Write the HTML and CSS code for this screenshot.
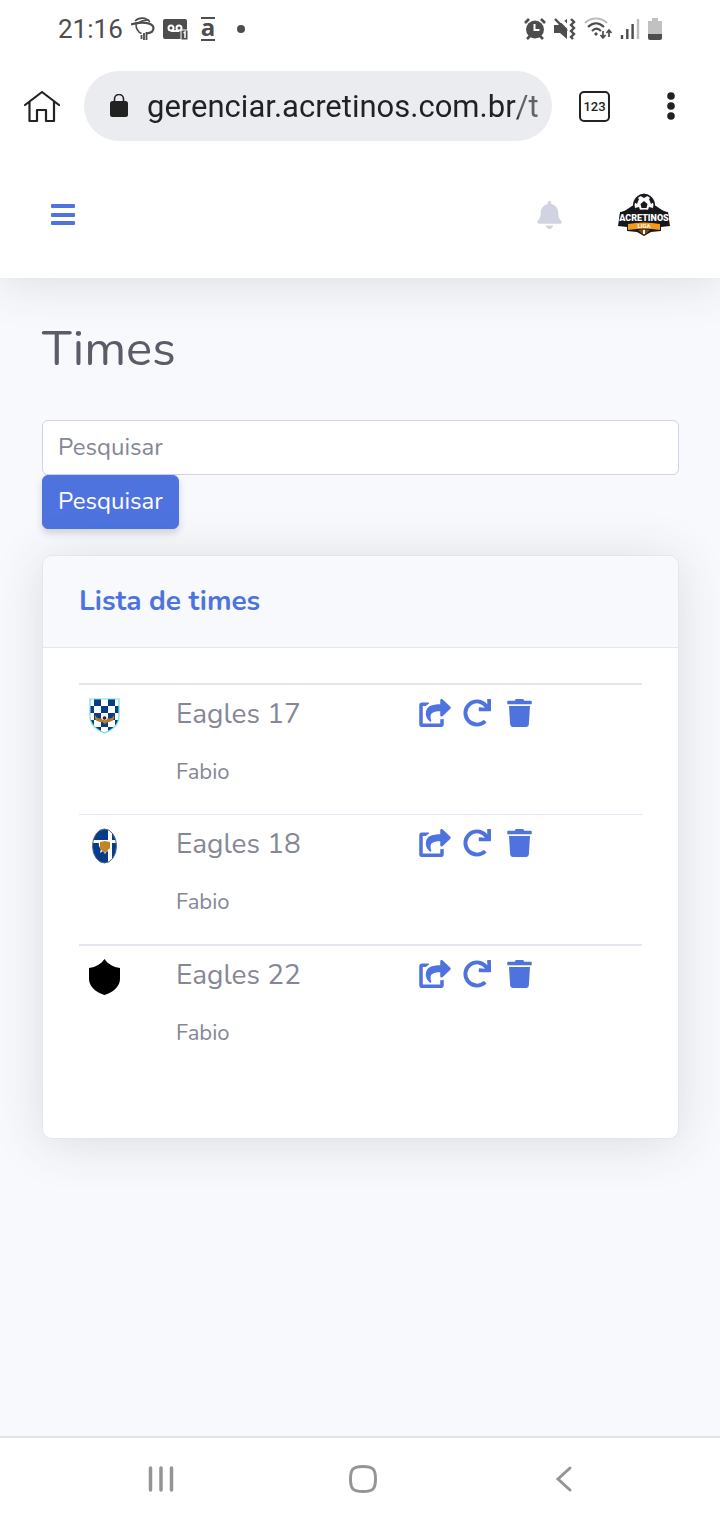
FILE: index.html
```html
<!DOCTYPE html>
<html lang="pt-BR">
<head>
<meta charset="utf-8">
<meta name="viewport" content="width=device-width, initial-scale=1">
<title>Times</title>
<link rel="stylesheet" href="styles.css">
</head>
<body>
<svg class="defs" aria-hidden="true">
  <symbol id="share" viewBox="0 0 576 512">
    <path fill="currentColor" d="M568.482 177.448L424.479 313.433C409.3 327.768 384 317.14 384 295.985v-71.963c-144.575.97-205.566 35.113-164.775 171.353 4.483 14.973-12.846 26.567-25.006 17.33C155.252 383.105 120 326.488 120 269.339c0-143.937 117.599-172.5 264-173.312V24.012c0-21.174 25.317-31.768 40.479-17.448l144.003 135.988c10.02 9.463 10.028 25.425 0 34.896zM384 379.128V448H64V128h50.916a11.99 11.99 0 0 0 8.648-3.693c14.953-15.568 32.237-27.89 51.014-37.676C185.708 80.83 181.584 64 169.033 64H48C21.49 64 0 85.49 0 112v352c0 26.51 21.49 48 48 48h352c26.51 0 48-21.49 48-48v-88.806c0-8.288-8.197-14.066-16.011-11.302a71.83 71.83 0 0 1-34.189 3.377c-7.27-1.046-13.8 4.514-13.8 11.859z"/>
  </symbol>
  <symbol id="redo" viewBox="0 0 512 512">
    <path fill="currentColor" d="M500.33 0h-47.41a12 12 0 0 0-12 12.57l4 82.76A247.42 247.42 0 0 0 256 8C119.34 8 7.9 119.53 8 256.19 8.1 393.07 119.1 504 256 504a247.1 247.1 0 0 0 166.18-63.91 12 12 0 0 0 .48-17.43l-34-34a12 12 0 0 0-16.38-.55A176 176 0 1 1 402.1 157.8l-101.53-4.87a12 12 0 0 0-12.57 12v47.41a12 12 0 0 0 12 12h200.33a12 12 0 0 0 12-12V12a12 12 0 0 0-12-12z"/>
  </symbol>
  <symbol id="trash" viewBox="0 0 448 512">
    <path fill="currentColor" d="M432 32H312l-9.400-18.700A24 24 0 0 0 281.100 0H166.800a23.700 23.700 0 0 0-21.400 13.300L136 32H16A16 16 0 0 0 0 48v32a16 16 0 0 0 16 16h416a16 16 0 0 0 16-16V48a16 16 0 0 0-16-16zM53.200 467a48 48 0 0 0 47.900 45h245.800a48 48 0 0 0 47.900-45L416 128H32z"/>
  </symbol>
</svg>

<header class="status">
  <div class="status-group status-left">
    <span class="clock">21:16</span>
    <svg width="24" height="24" viewBox="0 0 24 24" fill="none" stroke="#4d4d4d">
      <path d="M4 4C8 0 15 0 19 5" stroke-width="1.600"/>
      <path d="M0 7.500C9 4.500 22 5 22.500 11c0 3-3 5-6.500 5.500" stroke-width="2.200"/>
      <path d="M5 7c0 5 2 8 5.500 9.500M18 3c-5 0-9 1-12 4" stroke-width="1.600"/>
      <path d="M10.500 18v4M13 16v7M15.500 15v8" stroke-width="1.800"/>
    </svg>
    <svg width="26" height="24" viewBox="0 0 26 24">
      <rect y="2" width="24" height="20" rx="2" fill="#4d4d4d"/>
      <g fill="none" stroke="#fff" stroke-width="2"><circle cx="8" cy="11" r="2.500"/><circle cx="16" cy="11" r="2.500"/><path d="M8 14h8"/></g>
      <path d="M18 13h7v10h-7z" fill="#4d4d4d" stroke="#fff"/>
      <path d="M20.500 16l1.500-1v6" fill="none" stroke="#fff" stroke-width="1.500"/>
    </svg>
    <span class="app-letter">a</span>
    <span class="dot"></span>
  </div>
  <div class="status-group status-right">
    <svg width="22" height="24" viewBox="0 0 22 24">
      <circle cx="11" cy="12.500" r="9" fill="#4d4d4d"/>
      <path d="M1 6l4-4M21 6l-4-4M3 22l4-4M19 22l-4-4" stroke="#4d4d4d" stroke-width="2.600"/>
      <path d="M10.500 7v6h5" fill="none" stroke="#fff" stroke-width="2"/>
    </svg>
    <svg width="22" height="24" viewBox="0 0 22 24">
      <path d="M0 8h4l9-6v20l-7-6H0z" fill="#4d4d4d"/>
      <path d="M4 0l12 12" stroke="#fff" stroke-width="3.500"/>
      <path d="M1 2l12 12" stroke="#4d4d4d" stroke-width="2.400"/>
      <path d="M17 2l3 3-3 3 3 3-3 3 3 3-3 3 2 2" fill="none" stroke="#4d4d4d" stroke-width="2.400"/>
    </svg>
    <svg width="28" height="24" viewBox="0 0 28 24" fill="none" stroke="#4d4d4d" stroke-width="2.200">
      <path d="M1 6c6-6 16-6 22 0" stroke="#bdbdbd"/>
      <path d="M4 10c5-5 11-5 16 0M8 14c3-3 6-3 9 0"/>
      <circle cx="12" cy="17" r="1.200" fill="#4d4d4d" stroke-width="1"/>
      <path d="M19 14v7M16.500 18l2.500 3 2.500-3M25 20v-7M22.500 16l2.500-3 2.500 3" stroke-width="1.700"/>
    </svg>
    <svg width="20" height="24" viewBox="0 0 20 24">
      <path d="M2 18v4M7.300 12v10M12.600 7v15" stroke="#4d4d4d" stroke-width="2.400"/>
      <path d="M18 2v20" stroke="#bdbdbd" stroke-width="2.400"/>
    </svg>
    <svg width="14" height="24" viewBox="0 0 14 24">
      <path d="M0 4h4V1h6v3h4v13H0z" fill="#c1c1c1"/>
      <path d="M0 17h14v4a2 2 0 0 1-2 2H2a2 2 0 0 1-2-2z" fill="#4d4d4d"/>
    </svg>
  </div>
</header>

<div class="toolbar">
  <button class="icon-btn" aria-label="Página inicial">
    <svg width="36" height="34" viewBox="0 0 36 34" fill="none" stroke="#222" stroke-width="2.200" stroke-linecap="round" stroke-linejoin="round">
      <path d="M1 16L18 3l17 13M5.500 13v19H13V21h9v11h8V13"/>
    </svg>
  </button>
  <div class="omnibox">
    <svg width="18" height="24" viewBox="0 0 18 24">
      <rect y="7" width="18" height="16" rx="2.500" fill="#222"/>
      <path d="M4.500 8V5a4.500 4.500 0 0 1 9 0v3" fill="none" stroke="#222" stroke-width="1.600"/>
    </svg>
    <input class="url" type="text" aria-label="Endereço" value="gerenciar.acretinos.com.br/t">
  </div>
  <button class="tabs" aria-label="Guias abertas">123</button>
  <button class="icon-btn" aria-label="Mais opções">
    <svg width="10" height="30" viewBox="0 0 10 30" fill="#222"><circle cx="5" cy="5" r="3.800"/><circle cx="5" cy="15" r="3.800"/><circle cx="5" cy="25" r="3.800"/></svg>
  </button>
</div>

<nav class="topbar">
  <button class="icon-btn menu" aria-label="Menu">
    <svg width="26" height="22" viewBox="0 0 26 22" fill="#4e73df"><rect width="24" height="4" rx="1" x="1" y="0"/><rect width="24" height="4" rx="1" x="1" y="9"/><rect width="24" height="4" rx="1" x="1" y="17"/></svg>
  </button>
  <button class="icon-btn bell" aria-label="Alertas">
    <svg width="25" height="28" viewBox="0 0 448 512" fill="#d1d3e2"><path d="M224 512c35.300 0 64-28.700 64-64H160c0 35.300 28.700 64 64 64zm215.400-149.700c-19.300-20.800-55.500-52-55.500-154.300 0-77.700-54.500-139.900-127.900-155.200V32c0-17.700-14.300-32-32-32s-32 14.300-32 32v20.800C118.600 68.100 64.100 130.300 64.100 208c0 102.300-36.200 133.500-55.500 154.300-6 6.400-8.700 14.200-8.600 21.700.1 16.400 13 32 32.100 32h383.800c19.100 0 32-15.600 32.100-32 0-7.600-2.600-15.300-8.500-21.700z"/></svg>
  </button>
  <button class="icon-btn" aria-label="Acretinos Liga">
    <svg width="54" height="44" viewBox="0 0 54 44">
      <path d="M9 17l9-6h18l9 6 6 3 2 13-9 1v4l-10 1-7 4-7-4-10-1v-4l-9-1 2-13z" fill="#18171c"/>
      <circle cx="27" cy="12" r="11" fill="#17191e"/>
      <circle cx="27" cy="12" r="9.500" fill="#fafafa"/>
      <path d="M23.500 11l3.500-3 3.500 3-1 4h-5zM22 2l5 3 5-3-5-1.500zM17 9l3 2 2-5-2-2zM37 9l-3 2-2-5 2-2zM18 15l4-1 2 6h-5zM36 15l-4-1-2 6h5z" fill="#17191e"/>
      <path d="M3 19q24-5 48 0l1 12q-25-4-50 0z" fill="#18171c"/>
      <text x="27" y="28" text-anchor="middle" class="logo-name">ACRETINOS</text>
      <path d="M11 31q16-3 32 0v6q-16-3-32 0z" fill="#f39a17"/>
      <text x="27" y="35" text-anchor="middle" class="logo-sub">LIGA</text>
      <path d="M21 37l6-1 6 1-3 3-3 2-3-2z" fill="#7b4a25"/>
      <path d="M26 37h2v4h-2z" fill="#fff"/>
    </svg>
  </button>
</nav>

<main class="page">
  <h1>Times</h1>
  <form class="search">
    <input class="field" type="text" placeholder="Pesquisar" aria-label="Pesquisar">
    <button class="submit" type="button">Pesquisar</button>
  </form>
  <section class="card">
    <h2>Lista de times</h2>
    <div class="card-body">
      <table>
        <colgroup><col class="col-crest"><col class="col-name"><col></colgroup>
        <tbody>
        <tr>
          <td>
            <svg class="crest" viewBox="0 0 35 37">
              <clipPath id="shield"><path d="M2 2h29v17c0 9-7 14-14.500 17C9 33 2 28 2 19z"/></clipPath>
              <g clip-path="url(#shield)"><path d="M0 0h34v37H0z" fill="#fff"/>
              <path d="M6 2h7v7H6zM20 2h7v7h-7zM2 9h4v7H2zM13 9h7v7h-7zM27 9h5v7h-5zM6 16h7v7H6zM20 16h7v7h-7zM2 23h4v7H2zM13 23h7v7h-7zM27 23h5v7h-5zM6 30h7v7H6zM20 30h7v7h-7z" fill="#073c89"/></g>
              <path d="M2 2h29v17c0 9-7 14-14.500 17C9 33 2 28 2 19z" fill="none" stroke="#72dce3" stroke-width="1.200"/>
              <path d="M7 18c2 4 5 4 8 3h4c3 1 6 0 7-3 1 5-2 7-6 7l-3 2-3-2c-5 0-8-2-7-7z" fill="#b57b2b"/>
              <circle cx="16.500" cy="20" r="3.200" fill="#f4eee9"/><circle cx="16.500" cy="21" r="1.800" fill="#401d20"/>
            </svg>
          </td>
          <td><div class="team">Eagles 17</div><p class="owner">Fabio</p></td>
          <td><div class="actions">
            <a href="#" aria-label="Compartilhar"><svg width="32" height="28"><use href="#share"/></svg></a>
            <a class="redo" href="#" aria-label="Atualizar"><svg width="28" height="28"><use href="#redo"/></svg></a>
            <a href="#" aria-label="Excluir"><svg width="25" height="28"><use href="#trash"/></svg></a>
          </div></td>
        </tr>
        <tr>
          <td>
            <svg class="crest" viewBox="0 0 35 37">
              <clipPath id="oval"><ellipse cx="16.500" cy="19" rx="12" ry="17"/></clipPath>
              <g clip-path="url(#oval)"><path d="M0 0h34v37H0z" fill="#073c89"/><path d="M20 0h4v37h-4zM0 13h34v3H0z" fill="#fff"/></g>
              <ellipse cx="16.500" cy="19" rx="12" ry="17" fill="none" stroke="#58708e"/>
              <path d="M11 13l3 1h5l3-1-1 3v6l1 4-3-2-2 3-2-3-3 2 1-4c-3-3-2-6-2-9z" fill="#fff"/>
              <path d="M12 15l5-1 5 1v6l-5 5-5-4z" fill="#c68420"/>
            </svg>
          </td>
          <td><div class="team">Eagles 18</div><p class="owner">Fabio</p></td>
          <td><div class="actions">
            <a href="#" aria-label="Compartilhar"><svg width="32" height="28"><use href="#share"/></svg></a>
            <a class="redo" href="#" aria-label="Atualizar"><svg width="28" height="28"><use href="#redo"/></svg></a>
            <a href="#" aria-label="Excluir"><svg width="25" height="28"><use href="#trash"/></svg></a>
          </div></td>
        </tr>
        <tr>
          <td>
            <svg class="crest" viewBox="0 0 35 37"><path d="M16.500 1C20 6 25 9 32 10v11c0 7-6 13-15.500 16C7 34 1 28 1 21V10C8 9 13 6 16.500 1z" fill="#000"/></svg>
          </td>
          <td><div class="team">Eagles 22</div><p class="owner">Fabio</p></td>
          <td><div class="actions">
            <a href="#" aria-label="Compartilhar"><svg width="32" height="28"><use href="#share"/></svg></a>
            <a class="redo" href="#" aria-label="Atualizar"><svg width="28" height="28"><use href="#redo"/></svg></a>
            <a href="#" aria-label="Excluir"><svg width="25" height="28"><use href="#trash"/></svg></a>
          </div></td>
        </tr>
        </tbody>
      </table>
    </div>
  </section>
</main>

<footer class="navbar">
  <button class="icon-btn" aria-label="Recentes"><svg width="28" height="28" viewBox="0 0 28 28" stroke="#959595" stroke-width="3.500" stroke-linecap="round"><path d="M3.500 3v22M14 3v22M24.500 3v22"/></svg></button>
  <button class="icon-btn" aria-label="Início"><svg width="30" height="30" viewBox="0 0 30 30" fill="none" stroke="#959595" stroke-width="3"><path d="M15 2.500c10 0 12.500 2.500 12.500 12.500S25 27.500 15 27.500 2.500 25 2.500 15 5 2.500 15 2.500z"/></svg></button>
  <button class="icon-btn" aria-label="Voltar"><svg width="22" height="28" viewBox="0 0 22 28" fill="none" stroke="#959595" stroke-width="3" stroke-linecap="round"><path d="M19 3L7 14l12 11"/></svg></button>
</footer>
</body>
</html>
```
FILE: styles.css
```css
* { box-sizing: border-box; }
body {
  margin: 0;
  min-height: 100vh;
  display: flex;
  flex-direction: column;
  background: #f8f9fc;
  color: #858796;
  font: 28px/42px Nunito, Lato, sans-serif;
}
svg { display: block; flex: none; }
.defs { position: absolute; width: 0; height: 0; }
button, input { font: inherit; }
.icon-btn { padding: 0; border: 0; background: none; }

.status {
  display: flex;
  justify-content: space-between;
  align-items: center;
  height: 57px;
  padding: 0 58px;
  background: #fff;
  color: #4d4d4d;
}
.status-group { display: flex; align-items: center; }
.status-left { gap: 8px; }
.status-right { gap: 8px; }
.clock { font: 26px/32px Roboto, sans-serif; }
.app-letter {
  width: 14px;
  margin-left: 4px;
  padding-bottom: 4px;
  border: solid #4d4d4d;
  border-width: 2px 0;
  font: bold 24px/16px "Open Sans", sans-serif;
  text-align: center;
}
.dot { width: 8px; height: 8px; margin-left: 14px; border-radius: 50%; background: #4d4d4d; }

.toolbar {
  position: relative;
  z-index: 1;
  display: flex;
  align-items: center;
  height: 98px;
  padding: 0 44px 0 24px;
  background: #fff;
}
.omnibox {
  flex: 1;
  display: flex;
  align-items: center;
  gap: 19px;
  min-width: 0;
  height: 70px;
  margin: 0 27px 0 24px;
  padding: 0 12px 0 26px;
  border-radius: 35px;
  background: #ebecf0;
}
.url {
  flex: 1;
  min-width: 0;
  padding: 2px 0 0;
  border: 0;
  background: linear-gradient(90deg, #202124 94%, #5f6368 95%);
  background-clip: text;
  color: transparent;
  font: 31px/40px Roboto, sans-serif;
}
.tabs {
  width: 31px;
  height: 31px;
  margin-right: 56px;
  padding: 0;
  border: 2px solid #222;
  border-radius: 5px;
  background: none;
  color: #222;
  font: 500 13px/27px Roboto, sans-serif;
}

.topbar {
  display: flex;
  align-items: center;
  height: 123px;
  padding: 0 49px 4px 50px;
  background: #fff;
  box-shadow: 0 4px 49px rgba(58, 59, 69, .15);
}
.menu { margin-right: auto; }
.bell { margin-right: 55px; }
.logo-name { font: 900 9px Roboto, sans-serif; fill: #fff; }
.logo-sub { font: bold 6px Roboto, sans-serif; fill: #fff; }

.page { flex: 1; padding: 42px 41px 42px 42px; }
h1 {
  margin: 0 0 42px;
  color: #5a5c69;
  font-size: 49px;
  font-weight: 400;
  line-height: 58px;
}
.search { margin-bottom: 26px; font-size: 24px; line-height: 36px; }
.field, .submit {
  display: block;
  padding: 7px 15px 9px;
  border: 1px solid #d1d3e2;
  border-radius: 6px;
}
.field { width: 100%; height: 55px; background: #fff; color: #6e707e; }
.field::placeholder { color: #858796; opacity: 1; }
.submit {
  height: 54px;
  border-color: #4e73df;
  background: #4e73df;
  color: #fff;
  box-shadow: 0 4px 7px rgba(58, 59, 69, .2);
}

.card {
  border: 1px solid #e3e6f0;
  border-radius: 10px;
  background: #fff;
  box-shadow: 0 4px 49px rgba(58, 59, 69, .15);
}
h2 {
  margin: 0;
  padding: 24px 36px 25px;
  border-bottom: 1px solid #e3e6f0;
  border-radius: 9px 9px 0 0;
  background: #f8f9fc;
  color: #4e73df;
  font-size: 28px;
  line-height: 42px;
}
.card-body { padding: 35px 36px 63px; }
table { width: 100%; border-collapse: separate; border-spacing: 0; table-layout: fixed; }
.col-crest { width: 16%; }
.col-name { width: 43%; }
td { padding: 8px 7px; vertical-align: top; border-top: 1px solid #e3e6f0; }
tr:first-child td, tr:last-child td { border-top-width: 2px; }
.crest { width: 35px; height: 37px; margin: 4px 0 0 2px; }
.owner { margin: 16px 0 17px; font-size: 22px; line-height: 34px; }
.team { margin-bottom: 20px; }
.actions { display: flex; gap: 12px; padding: 6px 0 0 1px; }
.redo { margin-right: 4px; }
.actions a { color: #4e73df; }

.navbar {
  display: flex;
  justify-content: space-between;
  align-items: center;
  height: 84px;
  padding: 0 147px;
  border-top: 2px solid #e2e3e3;
  background: #fff;
}
```
